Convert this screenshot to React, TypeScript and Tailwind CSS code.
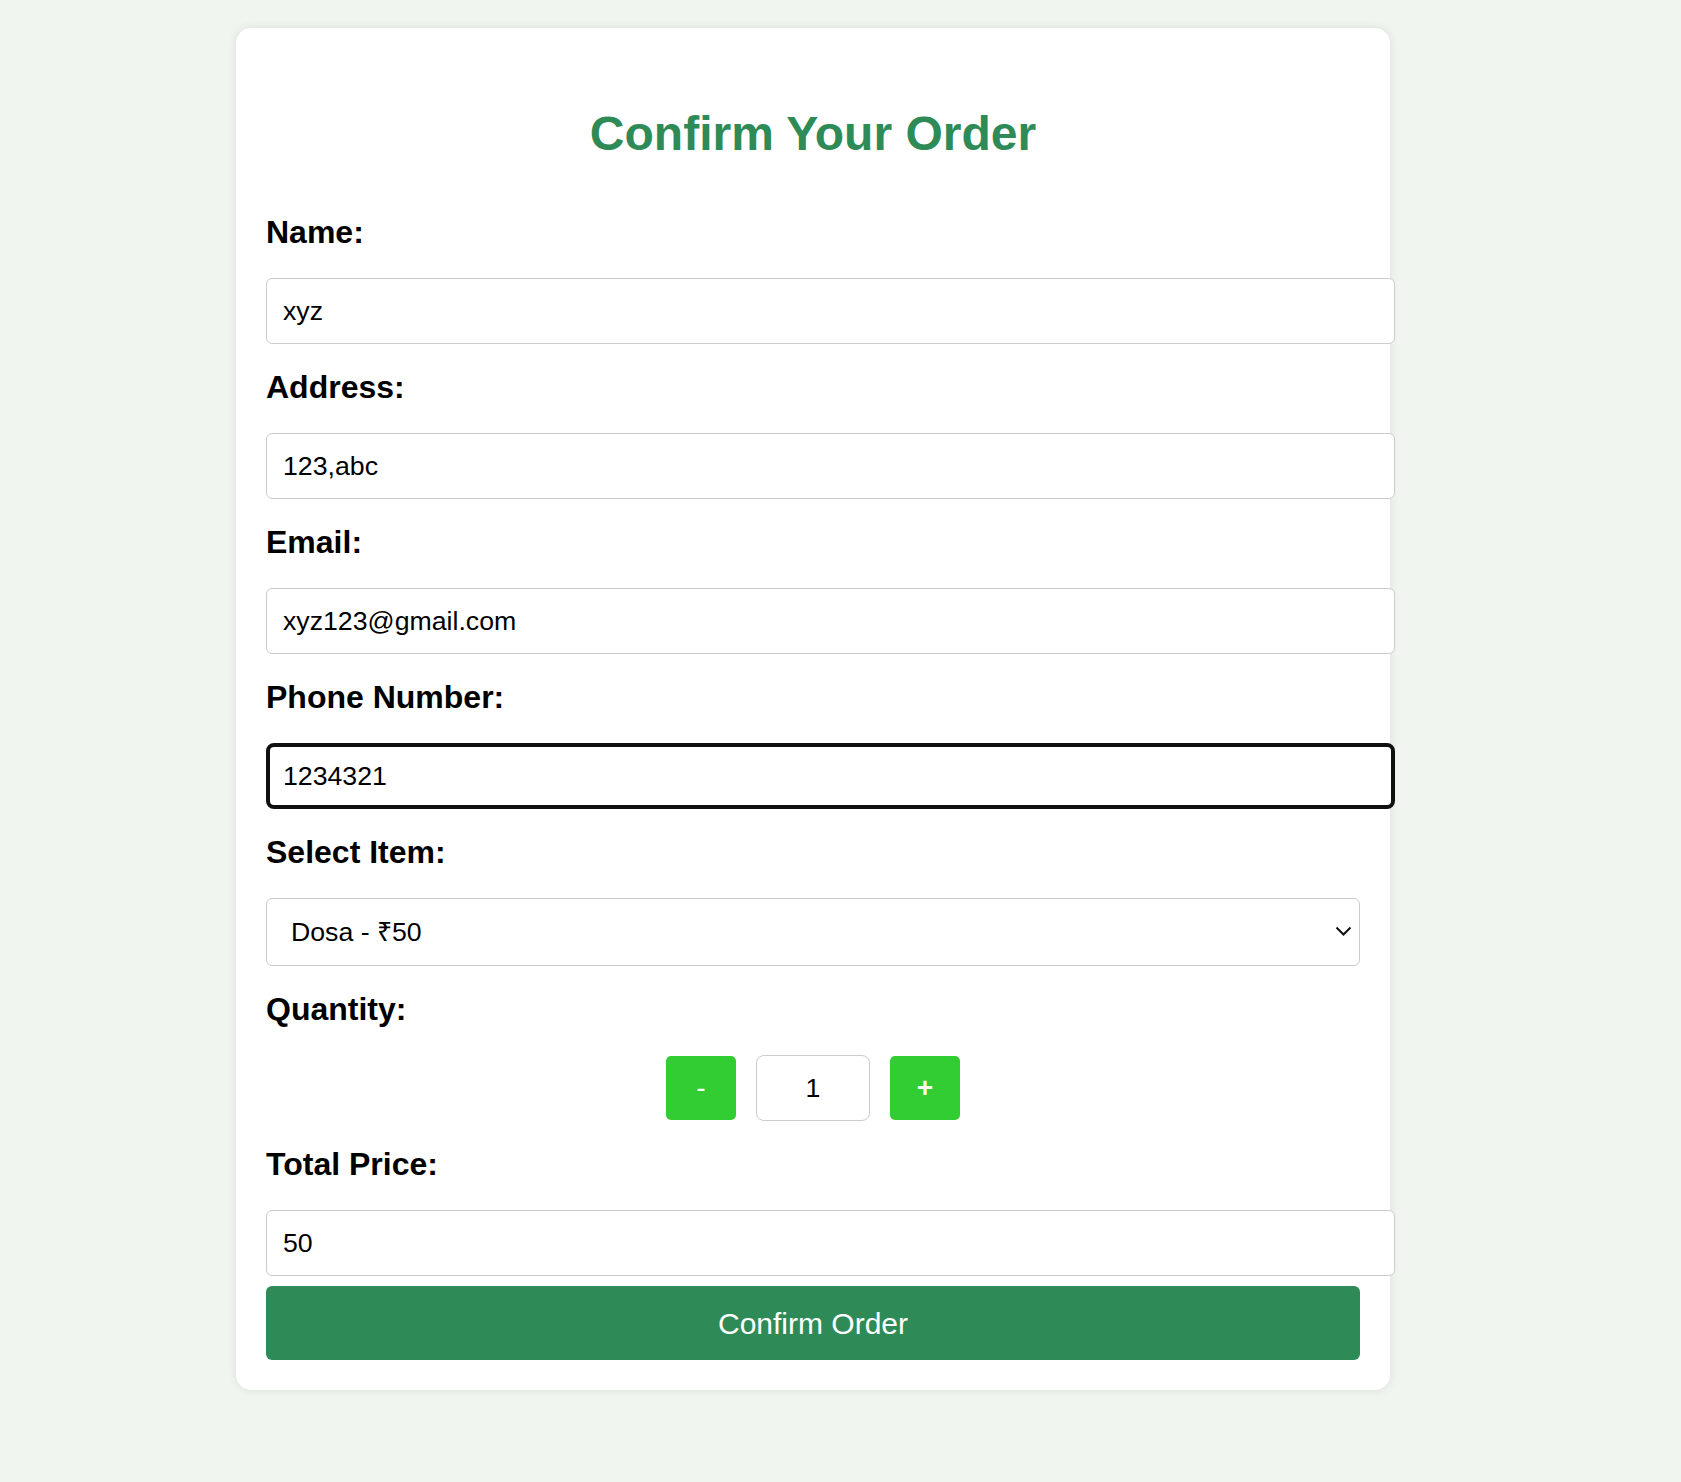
import { useState } from "react";

const FONT = "font-['Liberation_Sans',Arial,sans-serif]";

const ITEMS = [
  { name: "Dosa", price: 50 },
  { name: "Idli", price: 30 },
  { name: "Vada", price: 40 },
];

function Field({ label, children }: { label: string; children: React.ReactNode }) {
  return (
    <div className="flex flex-col">
      <label className="mt-[15px] mb-[27px] block text-[32px] leading-[37px] font-bold text-black">
        {label}
      </label>
      {children}
    </div>
  );
}

const inputCls =
  "box-border block h-[66px] w-[calc(100%+35px)] mb-[10px] rounded-[6px] border border-[#cccccc] bg-white px-[16px] text-[26.7px] text-black outline-none";

export default function App() {
  const [qty, setQty] = useState(1);
  const [item, setItem] = useState(0);
  const total = ITEMS[item].price * qty;

  return (
    <div className={`${FONT} min-h-screen bg-[#f0f6ef] pt-[28px] pb-[90px] pl-[236px]`}>
      <div className="box-border flex w-[1154px] flex-col rounded-[15px] bg-white p-[30px] shadow-[0_0_10px_rgba(0,0,0,0.1)]">
        <h2 className="mt-[48px] mb-[38px] text-center text-[48px] leading-[55px] font-bold text-[#2e8b57]">
          Confirm Your Order
        </h2>

        <form className="flex flex-col" onSubmit={(e) => e.preventDefault()}>
          <Field label="Name:">
            <input className={inputCls} defaultValue="xyz" />
          </Field>
          <Field label="Address:">
            <input className={inputCls} defaultValue="123,abc" />
          </Field>
          <Field label="Email:">
            <input className={inputCls} defaultValue="xyz123@gmail.com" />
          </Field>
          <Field label="Phone Number:">
            <input
              className="box-border block h-[66px] w-[calc(100%+35px)] mb-[10px] rounded-[8px] border-[4px] border-[#101010] bg-white px-[13px] text-[26.7px] text-black outline-none"
              defaultValue="1234321"
            />
          </Field>
          <Field label="Select Item:">
            <div className="relative mb-[10px]">
              <select
                value={item}
                onChange={(e) => setItem(Number(e.target.value))}
                className="box-border block h-[68px] w-full appearance-none rounded-[6px] border border-[#cccccc] bg-white pl-[24px] text-[26.7px] text-black outline-none"
              >
                {ITEMS.map((it, i) => (
                  <option key={it.name} value={i}>
                    {it.name} - ₹{it.price}
                  </option>
                ))}
              </select>
              <svg
                className="pointer-events-none absolute right-[8px] top-[28px]"
                width="17"
                height="11"
                viewBox="0 0 17 11"
                fill="none"
              >
                <path d="M1.5 1.5 L8.5 8.5 L15.5 1.5" stroke="#111" strokeWidth="2" />
              </svg>
            </div>
          </Field>
          <Field label="Quantity:">
            <div className="mb-[10px] flex items-center justify-center">
              <button
                type="button"
                onClick={() => setQty((q) => Math.max(1, q - 1))}
                className="mx-[10px] h-[64px] w-[70px] rounded-[5px] bg-[#32cd32] text-[28px] text-white"
              >
                -
              </button>
              <input
                value={qty}
                readOnly
                className="mx-[10px] box-border h-[66px] w-[114px] rounded-[8px] border border-[#cccccc] text-center text-[26.7px] text-black outline-none"
              />
              <button
                type="button"
                onClick={() => setQty((q) => q + 1)}
                className="mx-[10px] h-[64px] w-[70px] rounded-[5px] bg-[#32cd32] text-[28px] font-bold text-white"
              >
                +
              </button>
            </div>
          </Field>
          <Field label="Total Price:">
            <input className={inputCls} value={total} readOnly />
          </Field>
          <button
            type="submit"
            className="block h-[74px] w-full rounded-[6px] bg-[#2e8b57] text-[30px] text-white"
          >
            Confirm Order
          </button>
        </form>
      </div>
    </div>
  );
}
